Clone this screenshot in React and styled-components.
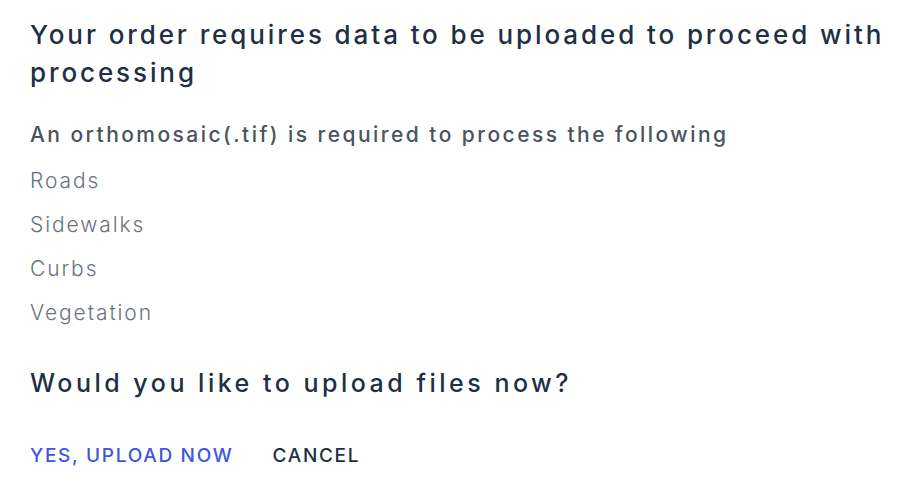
import styled, { createGlobalStyle } from "styled-components";

const GlobalStyle = createGlobalStyle`
  body {
    margin: 0;
    background: #ffffff;
    font-family: Inter, "Open Sans", "Liberation Sans", sans-serif;
  }
`;

const items = ["Roads", "Sidewalks", "Curbs", "Vegetation"];

const App = () => {
  return (
    <>
      <GlobalStyle />
      <Dialog>
        <Title>Your order requires data to be uploaded to proceed with processing</Title>
        <Requirement>
          <Lead>An orthomosaic(.tif) is required to process the following</Lead>
          <List>
            {items.map((item) => (
              <Item key={item}>{item}</Item>
            ))}
          </List>
        </Requirement>
        <Question>Would you like to upload files now?</Question>
        <Actions>
          <Action primary>YES, UPLOAD NOW</Action>
          <Action>CANCEL</Action>
        </Actions>
      </Dialog>
    </>
  );
};

export default App;

const Dialog = styled.div`
  display: flex;
  flex-direction: column;
  padding: 16px 8px 0 30px;
  width: 900px;
  box-sizing: border-box;
`;

const Title = styled.h2`
  margin: 0;
  font-size: 26px;
  line-height: 38px;
  font-weight: 500;
  letter-spacing: 2.9px;
  color: #1f2f45;
`;

const Requirement = styled.div`
  display: flex;
  flex-direction: column;
  margin-top: 30px;
`;

const Lead = styled.p`
  margin: 0;
  font-size: 21px;
  line-height: 26px;
  font-weight: 500;
  letter-spacing: 2.45px;
  color: #4a5360;
`;

const List = styled.ul`
  list-style: none;
  margin: 11px 0 0;
  padding: 0;
  display: flex;
  flex-direction: column;
`;

const Item = styled.li`
  font-size: 21px;
  line-height: 44px;
  font-weight: 300;
  letter-spacing: 1.9px;
  color: #6b727c;
`;

const Question = styled.h3`
  margin: 32px 0 0;
  font-size: 25px;
  line-height: 32px;
  font-weight: 500;
  letter-spacing: 3.5px;
  color: #1f2f45;
`;

const Actions = styled.div`
  display: flex;
  align-items: center;
  gap: 39px;
  margin-top: 45px;
`;

const Action = styled.button`
  border: none;
  background: none;
  padding: 0;
  font-family: inherit;
  font-size: 19px;
  line-height: 24px;
  font-weight: 500;
  letter-spacing: 1.7px;
  cursor: pointer;
  color: ${({ primary }) => (primary ? "#3d55e6" : "#1f2f45")};
`;
